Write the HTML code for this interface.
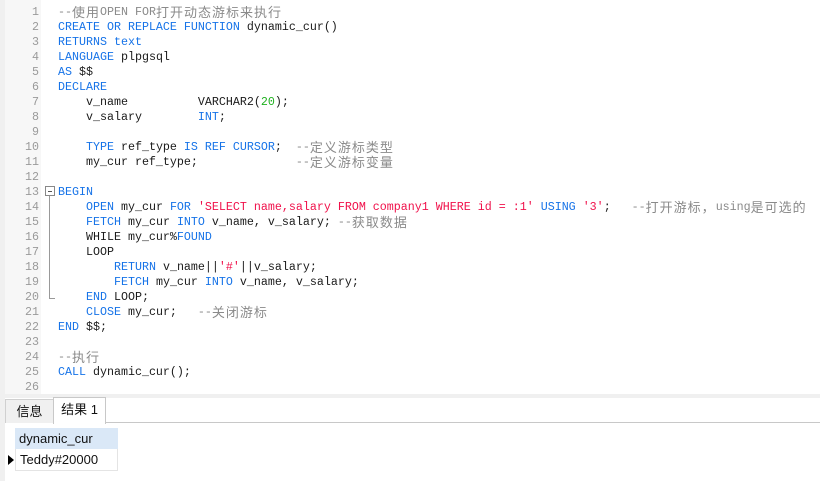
<!DOCTYPE html>
<html><head><meta charset="utf-8"><style>
body{margin:0;width:820px;height:481px;overflow:hidden;background:#fff;position:relative;font-family:"Liberation Sans","Noto Sans CJK SC",sans-serif}
#strip{position:absolute;left:0;top:0;width:5px;height:481px;background:#f0f0f0}
#gut{position:absolute;left:5px;top:0;width:36px;height:394px;background:#f7f7f7}
#band{position:absolute;left:0;top:394px;width:820px;height:4px;background:#f0f0f0}
.ln{position:absolute;left:5px;width:34px;text-align:right;font:11.67px "Liberation Mono",monospace;color:#9a9a9a;height:15px;line-height:15px}
.cl{position:absolute;left:58px;font:11.67px "Liberation Mono",monospace;color:#1a1a1a;white-space:pre;height:15px;line-height:15px}
.m{display:inline-block;height:15px;vertical-align:top;font:11.67px "Liberation Mono",monospace;line-height:15px}
.z{display:inline-block;height:15px;vertical-align:top;font-family:"Noto Sans CJK SC",sans-serif;font-size:13px;letter-spacing:1px;line-height:14px}
.k{color:#1673e8}.c{color:#8a8a8a}.s{color:#f0104a}.n{color:#20b020}
#fold{position:absolute;left:45px;top:186px;width:8px;height:8px;border:1px solid #888;background:#fff}
#fold:after{content:"";position:absolute;left:2px;top:4px;width:4px;height:1px;background:#555}
#fl{position:absolute;left:49px;top:196px;width:1px;height:102px;background:#999}
#fl2{position:absolute;left:49px;top:298px;width:6px;height:1px;background:#999}
.tab{position:absolute;font-size:13px;line-height:24px;text-align:center;color:#111}
#ed{position:absolute;left:0;top:1px;width:820px;height:393px}
</style></head><body>
<div id="strip"></div><div id="gut"></div><div id="band"></div>
<div id="fold"></div><div id="fl"></div><div id="fl2"></div>
<div id="ed">
<div class="ln" style="top:4px">1</div><div class="cl c" style="top:4px"><span class="m">--</span><span class="z">使用</span><span class="m">OPEN FOR</span><span class="z">打开动态游标来执行</span></div>
<div class="ln" style="top:19px">2</div><div class="cl" style="top:19px"><span class="k">CREATE OR REPLACE FUNCTION</span> dynamic_cur()</div>
<div class="ln" style="top:34px">3</div><div class="cl" style="top:34px"><span class="k">RETURNS text</span></div>
<div class="ln" style="top:49px">4</div><div class="cl" style="top:49px"><span class="k">LANGUAGE</span> plpgsql</div>
<div class="ln" style="top:64px">5</div><div class="cl" style="top:64px"><span class="k">AS</span> $$</div>
<div class="ln" style="top:79px">6</div><div class="cl" style="top:79px"><span class="k">DECLARE</span></div>
<div class="ln" style="top:94px">7</div><div class="cl" style="top:94px">    v_name          VARCHAR2(<span class="n">20</span>);</div>
<div class="ln" style="top:109px">8</div><div class="cl" style="top:109px">    v_salary        <span class="k">INT</span>;</div>
<div class="ln" style="top:124px">9</div>
<div class="ln" style="top:139px">10</div><div class="cl" style="top:139px">    <span class="k">TYPE</span> ref_type <span class="k">IS REF CURSOR</span>;  <span class="c">--<span class="z">定义游标类型</span></span></div>
<div class="ln" style="top:154px">11</div><div class="cl" style="top:154px">    my_cur ref_type;              <span class="c">--<span class="z">定义游标变量</span></span></div>
<div class="ln" style="top:169px">12</div>
<div class="ln" style="top:184px">13</div><div class="cl" style="top:184px"><span class="k">BEGIN</span></div>
<div class="ln" style="top:199px">14</div><div class="cl" style="top:199px">    <span class="k">OPEN</span> my_cur <span class="k">FOR</span> <span class="s">'SELECT name,salary FROM company1 WHERE id = :1'</span> <span class="k">USING</span> <span class="s">'3'</span>;   <span class="c">--<span class="z">打开游标，</span><span class="m">using</span><span class="z">是可选的</span></span></div>
<div class="ln" style="top:214px">15</div><div class="cl" style="top:214px">    <span class="k">FETCH</span> my_cur <span class="k">INTO</span> v_name, v_salary; <span class="c">--<span class="z">获取数据</span></span></div>
<div class="ln" style="top:229px">16</div><div class="cl" style="top:229px">    WHILE my_cur%<span class="k">FOUND</span></div>
<div class="ln" style="top:244px">17</div><div class="cl" style="top:244px">    LOOP</div>
<div class="ln" style="top:259px">18</div><div class="cl" style="top:259px">        <span class="k">RETURN</span> v_name||<span class="s">'#'</span>||v_salary;</div>
<div class="ln" style="top:274px">19</div><div class="cl" style="top:274px">        <span class="k">FETCH</span> my_cur <span class="k">INTO</span> v_name, v_salary;</div>
<div class="ln" style="top:289px">20</div><div class="cl" style="top:289px">    <span class="k">END</span> LOOP;</div>
<div class="ln" style="top:304px">21</div><div class="cl" style="top:304px">    <span class="k">CLOSE</span> my_cur;   <span class="c">--<span class="z">关闭游标</span></span></div>
<div class="ln" style="top:319px">22</div><div class="cl" style="top:319px"><span class="k">END</span> $$;</div>
<div class="ln" style="top:334px">23</div>
<div class="ln" style="top:349px">24</div><div class="cl c" style="top:349px">--<span class="z">执行</span></div>
<div class="ln" style="top:364px">25</div><div class="cl" style="top:364px"><span class="k">CALL</span> dynamic_cur();</div>
<div class="ln" style="top:379px">26</div>
</div>
<div style="position:absolute;left:5px;top:422px;width:815px;height:1px;background:#c8c8c8"></div>
<div class="tab" style="left:5px;top:399px;width:47px;height:23px;background:#f0f0f0;border:1px solid #d0d0d0;border-bottom:none;line-height:23px">信息</div>
<div class="tab" style="left:53px;top:397px;width:51px;height:26px;background:#fff;border:1px solid #c8c8c8;border-bottom:none;line-height:24px">结果 1</div>
<div style="position:absolute;left:15px;top:428px;width:103px;height:21px;background:#dae8f7;font-size:13px;line-height:21px;padding-left:4px;box-sizing:border-box;color:#111">dynamic_cur</div>
<div style="position:absolute;left:15px;top:449px;width:103px;height:22px;border:1px solid #e4e4e4;border-top:none;box-sizing:border-box;font-size:13px;line-height:22px;padding-left:4px;color:#111">Teddy#20000</div>
<div style="position:absolute;left:8px;top:455px;width:0;height:0;border-left:6px solid #000;border-top:5px solid transparent;border-bottom:5px solid transparent"></div>
</body></html>
